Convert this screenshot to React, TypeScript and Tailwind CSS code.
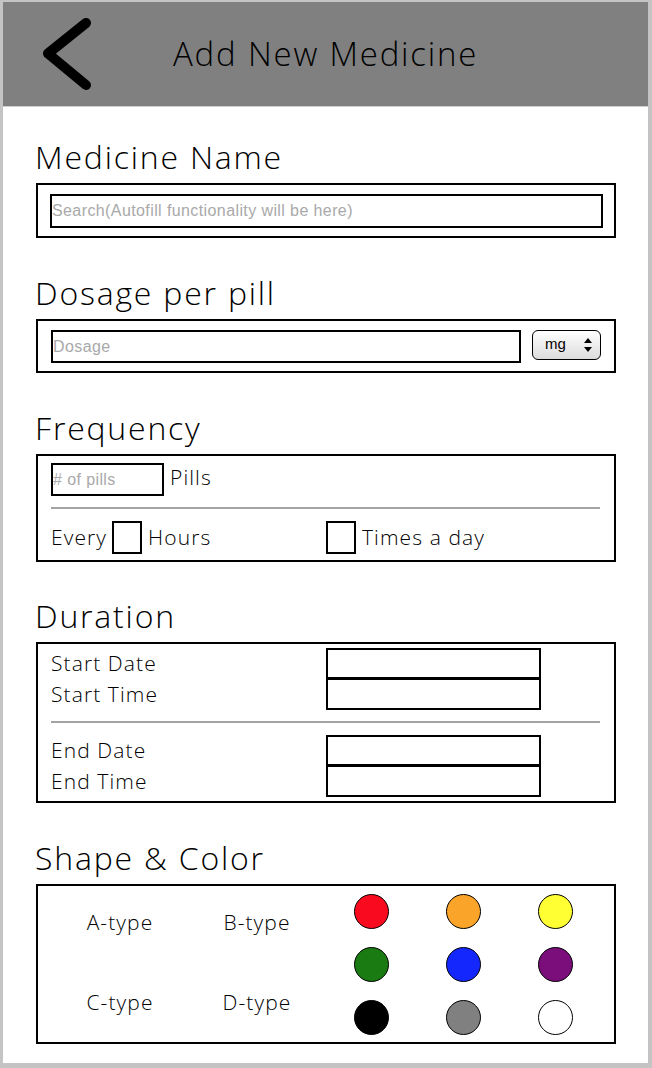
import type { ReactNode } from 'react';

const font = { fontFamily: '"Open Sans", "Noto Sans", sans-serif' };
const ui = { fontFamily: '"Liberation Sans", Arial, sans-serif' };

function Heading({ children }: { children: ReactNode }) {
  return (
    <div className="h-[36px] leading-[36px] text-[32px] tracking-[1.8px] font-light text-black mb-[8px] ml-[-1px]">
      {children}
    </div>
  );
}

function Box({ children, className = '' }: { children: ReactNode; className?: string }) {
  return <div className={`w-[580px] border-2 border-black ${className}`}>{children}</div>;
}

function Divider() {
  return <div className="h-[2px] bg-[#a3a3a3]" />;
}

const colors = [
  'bg-[#fa0a1f]', 'bg-[#fba42a]', 'bg-[#ffff33]',
  'bg-[#1a7b12]', 'bg-[#1428fe]', 'bg-[#7b0e7b]',
  'bg-black', 'bg-[#808080]', 'bg-white',
];

const field = 'block h-[33px] border-2 border-black px-0 text-[16px] tracking-[0.4px] outline-none placeholder:text-[#a9a9a9]';
const label = 'text-[21px] tracking-[1.1px] font-light';

export default function App() {
  return (
    <div className="w-[652px] h-[1068px] bg-[#c4c4c4] pt-[2px] pl-[3px]" style={font}>
      <div className="w-[645px] h-[1061px] bg-white">
        {/* Header */}
        <div className="h-[105px] bg-[#808080] border-b border-[#cdcdcd] flex items-center pl-[38px]">
          <svg width="52" height="78" viewBox="0 0 52 78" fill="none">
            <path d="M45 8 L7 38.5 L45 70" stroke="black" strokeWidth="10" strokeLinecap="round" strokeLinejoin="round" />
          </svg>
          <div className="ml-[80px] text-[33px] tracking-[1.8px] font-light text-black leading-none pb-[2px]">Add New Medicine</div>
        </div>

        <div className="pl-[33px] pt-[32px]">
          {/* Medicine name */}
          <Heading>Medicine Name</Heading>
          <Box className="px-[12px] pt-[9px] pb-[8px]">
            <input placeholder="Search(Autofill functionality will be here)" className={`${field} w-[553px] h-[34px]`} style={ui} />
          </Box>

          {/* Dosage */}
          <div className="mt-[37px]">
            <Heading>Dosage per pill</Heading>
            <Box className="flex items-start pl-[13px] pt-[9px] pb-[8px]">
              <input placeholder="Dosage" className={`${field} w-[470px]`} style={ui} />
              <div
                className="ml-[11px] w-[69px] h-[30px] rounded-[6px] border-[1.5px] border-black bg-gradient-to-b from-white to-[#dcdcdc] flex items-center justify-between pl-[12px] pr-[8px] text-[15px]"
                style={ui}
              >
                <span className="mb-[2px]">mg</span>
                <svg width="8" height="14" viewBox="0 0 8 14">
                  <path d="M4 0 L8 5 L0 5 Z M4 14 L8 9 L0 9 Z" fill="black" />
                </svg>
              </div>
            </Box>
          </div>

          {/* Frequency */}
          <div className="mt-[37px]">
            <Heading>Frequency</Heading>
            <Box className={`pl-[13px] pr-[14px] pt-[7px] pb-[6px] ${label}`}>
              <div className="flex items-center h-[33px]">
                <input placeholder="# of pills" className={`${field} w-[113px]`} style={ui} />
                <span className="ml-[6px] mb-[4px]">Pills</span>
              </div>
              <div className="mt-[11px] mb-[12px]">
                <Divider />
              </div>
              <div className="flex items-center h-[33px]">
                <div className="w-[275px] flex items-center">
                  <span>Every</span>
                  <div className="ml-[5px] w-[30px] h-[33px] border-2 border-black" />
                  <span className="ml-[6px]">Hours</span>
                </div>
                <div className="w-[30px] h-[33px] border-2 border-black" />
                <span className="ml-[6px]">Times a day</span>
              </div>
            </Box>
          </div>

          {/* Duration */}
          <div className="mt-[36px]">
            <Heading>Duration</Heading>
            <Box className={`pl-[13px] pr-[14px] pt-[4px] pb-[4px] ${label}`}>
              <div className="flex">
                <div className="w-[275px]">
                  <div className="h-[31px] flex items-center">Start Date</div>
                  <div className="h-[31px] flex items-center">Start Time</div>
                </div>
                <div>
                  <div className="w-[215px] h-[31px] border-2 border-black" />
                  <div className="w-[215px] h-[31px] border-2 border-t-[1px] border-black" />
                </div>
              </div>
              <div className="mt-[11px] mb-[12px]">
                <Divider />
              </div>
              <div className="flex">
                <div className="w-[275px]">
                  <div className="h-[31px] flex items-center">End Date</div>
                  <div className="h-[31px] flex items-center">End Time</div>
                </div>
                <div>
                  <div className="w-[215px] h-[31px] border-2 border-black" />
                  <div className="w-[215px] h-[31px] border-2 border-t-[1px] border-black" />
                </div>
              </div>
            </Box>
          </div>

          {/* Shape & Color */}
          <div className="mt-[37px]">
            <Heading>Shape &amp; Color</Heading>
            <Box className={`h-[160px] flex pt-[8px] ${label}`}>
              <div className="ml-[32px] grid grid-cols-[100px_100px] gap-x-[37px] content-start pt-[16px] gap-y-[55px] leading-[25px] text-center">
                <span>A-type</span>
                <span>B-type</span>
                <span>C-type</span>
                <span>D-type</span>
              </div>
              <div className="ml-[47px] grid grid-cols-[35px_35px_35px] gap-x-[57px] gap-y-[18px] content-start">
                {colors.map(c => (
                  <div key={c} className={`w-[35px] h-[35px] rounded-full border-[1.5px] border-black ${c}`} />
                ))}
              </div>
            </Box>
          </div>
        </div>
      </div>
    </div>
  );
}
